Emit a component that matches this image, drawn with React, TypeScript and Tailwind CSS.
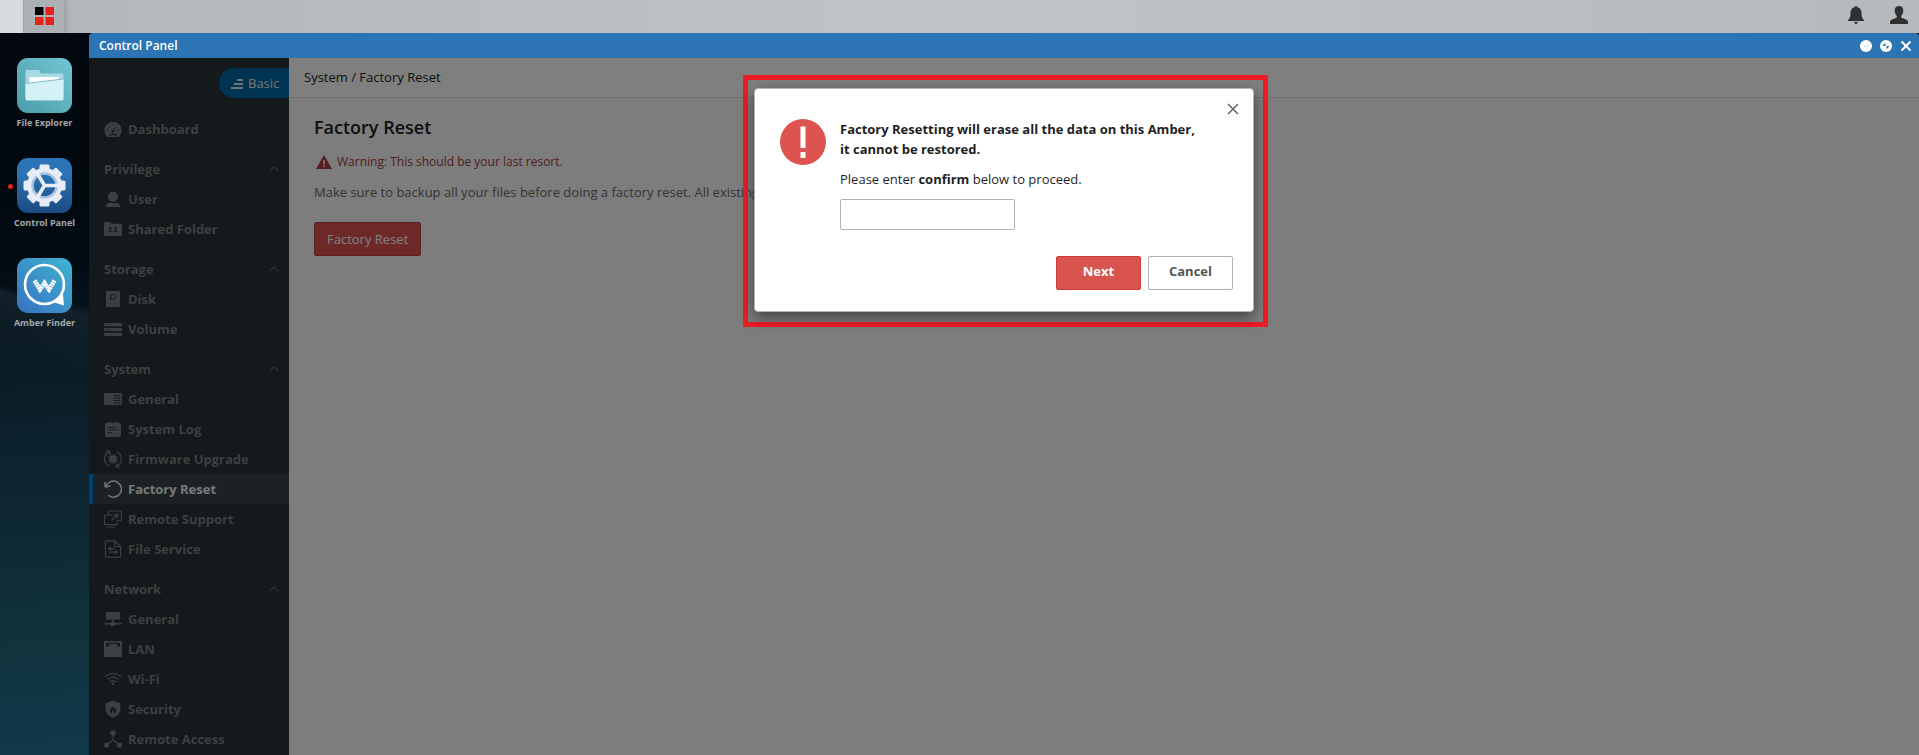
import type { ReactNode } from "react";

const BG = "#283238";

function Icon({ children }: { children: ReactNode }) {
  return (
    <svg viewBox="0 0 18 18" className="size-[18px] shrink-0" fill="currentColor" aria-hidden="true">
      {children}
    </svg>
  );
}

const line = { fill: "none", stroke: "currentColor", strokeWidth: 1.2 };
const cut = { fill: "none", stroke: BG, strokeWidth: 1.1 };

const icons: Record<string, ReactNode> = {
  dashboard: (
    <>
      <path d="M3.2 17A8.7 8.7 0 1 1 14.8 17z" />
      <path d="M5 15.400q4-2 8 0M9.200 11l3-4" {...cut} />
      <circle cx="8.800" cy="11.400" r="1.300" fill={BG} />
      <path d="M9 3.800v1.400M4.600 5.800l.9.900M2.800 10h1.400M13.800 10h1.400" {...cut} strokeWidth={0.900} />
    </>
  ),
  user: (
    <>
      <circle cx="9" cy="6.8" r="5" />
      <path d="M1.8 17c.3-2.8 2-4 4.5-4.4 1.600.9 3.800.9 5.400 0 2.500.4 4.200 1.600 4.500 4.400z" />
    </>
  ),
  shared: (
    <>
      <path d="M0 3.200Q0 2 1.200 2h5l1.400 1.800h9.200Q18 3.800 18 5v9.800Q18 16 16.800 16H1.200Q0 16 0 14.800z" />
      <g fill={BG}>
        <circle cx="6.400" cy="8.200" r="1.200" />
        <circle cx="11.600" cy="8.200" r="1.200" />
        <path d="M3.800 11.800q.2-1.600 2.600-1.600t2.300 1.600zM9.300 11.800q.1-1.600 2.300-1.600t2.600 1.600z" />
      </g>
    </>
  ),
  disk: (
    <>
      <rect x="2" y="1" width="14" height="16" rx="1" />
      <circle cx="9" cy="6.700" r="2.600" {...cut} strokeWidth={0.900} />
      <path d="M6.500 5v4.800h1.200" {...cut} strokeWidth={0.700} />
    </>
  ),
  volume: (
    <>
      <rect y="3" width="18" height="3.200" rx="0.800" />
      <rect y="7.900" width="18" height="3.200" rx="0.800" />
      <rect y="12.800" width="18" height="3.200" rx="0.800" />
      <path d="M2 4.600h5M2 9.500h5" {...cut} strokeWidth={0.500} />
    </>
  ),
  general: (
    <>
      <rect y="3" width="18" height="12" rx="1" />
      <path d="M9.500 5.500h7M9.500 8h7M9.500 10.500h7M9.500 13h7" {...cut} />
    </>
  ),
  log: (
    <>
      <path d="M1 4.500Q1 3 2.500 3H4V1.500h1.200V3h2V1.500h1.200V3h2V1.500h1.200V3h1.200V1.500H14V3h1.500Q17 3 17 4.500v11q0 1.500-1.500 1.500h-13Q1 17 1 15.500z" />
      <path d="M4 7.500h7.500M3.500 9.800h10.500M4 12.600h4.500" {...cut} strokeWidth={0.900} />
    </>
  ),
  firmware: (
    <>
      <path d="M5.500 1.400A8.300 8.300 0 0 0 5 16.300M12.500 16.600A8.300 8.300 0 0 0 13 1.700" {...line} />
      <path d="M2.300.9l3.500.2L5 4.500M15.700 17.100l-3.500-.2.800-3.400" {...line} />
      <rect x="5.600" y="5.600" width="6.800" height="6.800" rx="0.800" />
      <path d="M7 4v10M9 4v10M11 4v10M4 7h10M4 9h10M4 11h10" {...line} strokeWidth={0.700} />
    </>
  ),
  reset: (
    <>
      <path d="M2 6.200A8 8 0 1 1 4.200 15.200" {...line} strokeWidth={1.500} />
      <path d="M.8 2.200l.6 4.700 4.800-1" {...line} strokeWidth={1.500} />
    </>
  ),
  remote: (
    <>
      <path d="M4.500 4V2.200Q4.500 1 5.700 1h10.600q1.200 0 1.200 1.200v7q0 1.200-1.200 1.200h-2" {...line} />
      <path d="M8 5H1.600Q.6 5 .6 6v7.600q0 1 1 1h10.800q1 0 1-1V10M2.500 17h9M7.500 10.500L13 5M9.800 4.700h3.700v3.600" {...line} />
    </>
  ),
  file: (
    <>
      <path d="M10.800.8H2.600Q1.400.8 1.400 2v14q0 1.200 1.200 1.200h12.800q1.200 0 1.200-1.200V6.600zM10.800.8v5.800h5.800" {...line} />
      <path d="M10.500 8.800H5.500M5 12.200h7.500" {...line} strokeWidth={1.200} />
      <path d="M7 6.400v4.800L3.800 8.800zM11.300 9.800v4.800l3.200-2.400z" />
    </>
  ),
  network: (
    <>
      <rect x="2" y="2" width="14" height="7.500" rx="0.800" />
      <path d="M8.300 9h1.400v3h1.500v1h6.300v1.600h-6.300V16H6.800v-1.400H.5V13h6.300v-1h1.500z" />
    </>
  ),
  lan: (
    <>
      <rect y="1" width="18" height="16" rx="0.600" />
      <path d="M2 6.500V3h3v3.200zM13 3h3v3.500l-3-.3zM5 2.600h8v1.200H5z" fill={BG} />
    </>
  ),
  wifi: (
    <>
      <path d="M.8 6.800q8.200-7 16.400 0M3.400 9.600q5.600-4.800 11.200 0M6 12.300q3-2.600 6 0" {...line} strokeWidth={1.300} />
      <circle cx="9" cy="14" r="1.200" />
    </>
  ),
  security: (
    <>
      <path d="M9 .4l7.400 2.800v5.200q0 6.600-7.400 9.400-7.400-2.800-7.400-9.400V3.200z" />
      <path d="M8.600 5.200c.2 2 .8 2.400 1.400 3.200l.8-1c1 1.600 1.900 3 1.200 4.800-.3.900-.9 1.400-1.600 1.700.4-1.600-.5-2.700-1.400-3.600-.8 1-1.800 2-1.400 3.600-2-.8-2.300-2.900-1.300-4.600.9-1.400 2.100-2.300 2.300-4.100z" fill={BG} />
    </>
  ),
  access: (
    <>
      <circle cx="9" cy="2.900" r="2.700" />
      <path d="M9 5v5.200L3 14.500M9 10.200l6 4.300" {...line} />
      <rect x="0.300" y="12.800" width="4.600" height="4.600" rx="1" />
      <rect x="13.100" y="12.800" width="4.600" height="4.600" rx="1" />
    </>
  ),
};

const sections = [
  { title: "Privilege", items: [["user", "User"], ["shared", "Shared Folder"]] },
  { title: "Storage", items: [["disk", "Disk"], ["volume", "Volume"]] },
  {
    title: "System",
    items: [
      ["general", "General"],
      ["log", "System Log"],
      ["firmware", "Firmware Upgrade"],
      ["reset", "Factory Reset"],
      ["remote", "Remote Support"],
      ["file", "File Service"],
    ],
  },
  {
    title: "Network",
    items: [
      ["network", "General"],
      ["lan", "LAN"],
      ["wifi", "Wi-Fi"],
      ["security", "Security"],
      ["access", "Remote Access"],
    ],
  },
];

function NavItem({ icon, label, active = false }: { icon: string; label: string; active?: boolean }) {
  return (
    <a
      href="#"
      aria-current={active ? "page" : undefined}
      className={
        active
          ? "flex h-[30px] items-center gap-1.5 border-l-4 border-[#0082d8] bg-[#384448] pl-[11px] font-bold text-[#f0f0f0]"
          : "flex h-[30px] items-center gap-1.5 border-l-4 border-transparent pl-[11px] font-bold text-[#7d7f80]"
      }
    >
      <Icon>{icons[icon]}</Icon>
      <span className="pt-0.5">{label}</span>
    </a>
  );
}

function Sidebar() {
  return (
    <nav className="w-[200px] shrink-0 overflow-hidden bg-[#283238] pt-2.5">
      <button className="mb-4 ml-auto flex h-[30px] w-[70px] items-center gap-[5px] rounded-l-full bg-[#0068a6] pl-3 text-[#e8e8e8]">
        <svg viewBox="0 0 12 10" className="mt-0.5 h-[10px] w-3 shrink-0" fill="currentColor" aria-hidden="true">
          <path d="M6 0h6v2H6zM3 4h9v2H3zM0 8h12v2H0z" />
        </svg>
        <span className="pt-0.5">Basic</span>
      </button>
      <NavItem icon="dashboard" label="Dashboard" />
      {sections.map((s) => (
        <section key={s.title}>
          <button className="mt-2.5 flex h-[30px] w-full items-center justify-between pr-2.5 pl-[15px] font-bold text-[#7d7f80]">
            <span className="pt-0.5">{s.title}</span>
            <svg viewBox="0 0 10 6" className="h-1.5 w-2.5" aria-hidden="true">
              <path d="M.8 5.200L5 .8l4.200 4.400" fill="none" stroke="currentColor" strokeWidth="1" />
            </svg>
          </button>
          {s.items.map(([icon, label]) => (
            <NavItem key={label} icon={icon} label={label} active={label === "Factory Reset"} />
          ))}
        </section>
      ))}
    </nav>
  );
}

function FolderArt() {
  return (
    <svg viewBox="0 0 55 55" className="size-[55px]" aria-hidden="true">
      <defs>
        <linearGradient id="teal" x1="1" y1="0" x2="0" y2="1">
          <stop offset="0" stopColor="#72c6d3" />
          <stop offset="1" stopColor="#4c9ca9" />
        </linearGradient>
      </defs>
      <rect width="55" height="55" rx="11" fill="url(#teal)" />
      <path d="M8.500 13.500q0-1.500 1.500-1.500h12l2 3.500h21q1.500 0 1.500 1.500v22h-38z" fill="#a5dae2" />
      <path d="M12.500 19H42v6H12.500z" fill="#fff" />
      <path d="M8.500 25.500L46.500 21v20q0 1.500-1.500 1.500H10q-1.500 0-1.500-1.500z" fill="#d4f1f5" />
      <path d="M8.500 25.500L46.500 21" stroke="#7fbcc6" strokeWidth="1" />
    </svg>
  );
}

const teeth = [0, 45, 90, 135, 180, 225, 270, 315];

function GearArt() {
  return (
    <svg viewBox="0 0 55 55" className="size-[55px]" aria-hidden="true">
      <defs>
        <linearGradient id="blue" x1="0" y1="0" x2="0" y2="1">
          <stop offset="0.300" stopColor="#2b74b5" />
          <stop offset="1" stopColor="#1c4a80" />
        </linearGradient>
      </defs>
      <rect width="55" height="55" rx="11" fill="url(#blue)" />
      <g fill="#e8edf5">
        {teeth.map((a) => (
          <rect key={a} x="22.500" y="6.500" width="10" height="9" rx="1.500" transform={`rotate(${a} 27.500 27.500)`} />
        ))}
      </g>
      <circle cx="27.500" cy="27.500" r="15" fill="none" stroke="#e8edf5" strokeWidth="5" />
      <circle cx="27.500" cy="27.500" r="12" fill="none" stroke="#a9c4de" strokeWidth="2.500" />
      <path d="M27.500 27.500H42M27.500 27.500L20 15M27.500 27.500L20 40" stroke="#e8edf5" strokeWidth="3.600" />
    </svg>
  );
}

function FinderArt() {
  return (
    <svg viewBox="0 0 55 55" className="size-[55px]" aria-hidden="true">
      <defs>
        <linearGradient id="sky" x1="1" y1="0" x2="0" y2="1">
          <stop offset="0" stopColor="#3eb4d3" />
          <stop offset="1" stopColor="#3872bf" />
        </linearGradient>
      </defs>
      <rect width="55" height="55" rx="11" fill="url(#sky)" />
      <circle cx="27.500" cy="26.500" r="19.500" fill="none" stroke="#fff" strokeWidth="2.600" />
      <path d="M46 36l1 11.500-11-3.500q6-2.500 10-8z" fill="#fff" />
      <path d="M17.500 22.500l5.500 9 4.500-6.500 4.500 6.500 5.500-9" fill="none" stroke="#fff" strokeWidth="4.500" strokeDasharray="2 0.500" />
    </svg>
  );
}

function Dock() {
  const apps = [
    { name: "File Explorer", art: <FolderArt />, running: false },
    { name: "Control Panel", art: <GearArt />, running: true },
    { name: "Amber Finder", art: <FinderArt />, running: false },
  ];
  return (
    <aside className="flex w-[89px] shrink-0 flex-col bg-[linear-gradient(195deg,transparent_37%,#13222a_38%,transparent_46%),linear-gradient(177deg,#02080e_0%,#020b12_32%,#0a1b24_44%,#0e2733_66%,#10333d_85%,#12384b_100%)] pt-[25px]">
      {apps.map((a) => (
        <button key={a.name} className="relative flex h-[100px] flex-col items-center gap-0.5 text-[9px] leading-4 font-bold text-[#a4a8ab]">
          {a.art}
          <span>{a.name}</span>
          {a.running && <span className="absolute top-[26px] left-2 size-[5px] rounded-full bg-[#e2231a]" />}
        </button>
      ))}
    </aside>
  );
}

function TopBar() {
  return (
    <header className="flex h-[33px] shrink-0 items-stretch bg-[linear-gradient(90deg,#b2b7ba,#bfc4c7_50%,#b4babd)]">
      <div className="w-[23px] bg-[#d9dcde]" />
      <button aria-label="Home" className="flex w-[42px] items-center justify-center border-x border-[#9ea2a5] bg-[#acb1b4] pb-px shadow-[2px_0_4px_#9ea2a5]">
        <svg viewBox="0 0 19 18" className="h-[18px] w-[19px]" aria-hidden="true">
          <path d="M0 0h8.500v8H0z" />
          <path d="M10.500 0H19v8h-8.500zM0 10h8.500v8H0zM10.500 10H19v8h-8.500z" fill="#e2231a" />
        </svg>
      </button>
      <div className="ml-auto flex items-center gap-[26px] pr-[11px] pb-[3px] text-[#303030]">
        <button aria-label="Notifications">
          <svg viewBox="0 0 16 18" className="h-[18px] w-4" fill="currentColor" aria-hidden="true">
            <path d="M8 0q1.300 0 1.300 1.300C12.500 1.900 13.500 4.500 13.500 7c0 3.600.5 5.500 2.500 7v1H0v-1c2-1.500 2.500-3.400 2.500-7 0-2.500 1-5.100 4.200-5.700Q6.700 0 8 0zM6 16h4q-.5 2-2 2t-2-2z" />
          </svg>
        </button>
        <button aria-label="Account">
          <svg viewBox="0 0 18 18" className="size-[18px]" fill="currentColor" aria-hidden="true">
            <path d="M9 0c3 0 4.300 1.900 4.300 4.500 0 2.400-.9 4.100-2.100 5.500v1.600c.8 1 6.800 1.400 6.800 4.600V18H0v-1.800c0-3.200 6-3.600 6.800-4.600V10C5.600 8.600 4.700 6.900 4.700 4.500 4.700 1.900 6 0 9 0z" />
          </svg>
        </button>
      </div>
    </header>
  );
}

function TitleBar() {
  return (
    <div className="flex h-[25px] shrink-0 items-center rounded-t-sm bg-[#2c74b3] pr-[7px] pl-2.5 text-xs font-semibold text-white">
      <h1>Control Panel</h1>
      <div className="ml-auto flex gap-2">
        <button aria-label="Minimize">
          <svg viewBox="0 0 12 12" className="size-3" aria-hidden="true">
            <circle cx="6" cy="6" r="6" fill="#fff" />
            <path d="M3 6h6" stroke="#c9dcec" />
          </svg>
        </button>
        <button aria-label="Restore">
          <svg viewBox="0 0 12 12" className="size-3" aria-hidden="true">
            <circle cx="6" cy="6" r="6" fill="#fff" />
            <path d="M5.500 2.500v3.500H2.500zM6.500 9.500V6h3z" fill="#2c74b3" />
          </svg>
        </button>
        <button aria-label="Close">
          <svg viewBox="0 0 12 12" className="size-3" aria-hidden="true">
            <path d="M1.500 1.500l9 9M10.500 1.500l-9 9" stroke="#fff" strokeWidth="2" />
          </svg>
        </button>
      </div>
    </div>
  );
}

function Content() {
  return (
    <main className="flex min-w-0 flex-1 flex-col bg-[#fafafa]">
      <div className="flex h-10 items-center border-b border-[#dedede] bg-white px-[15px] text-[#222]">
        System / Factory Reset
      </div>
      <div className="flex flex-col items-start px-[25px] pt-[17px]">
        <h2 className="text-lg leading-6 font-semibold text-[#1c1c1c]">Factory Reset</h2>
        <p className="mt-[13px] flex items-center gap-[5px] pl-0.5 text-xs leading-5 text-[#a04040]">
          <svg viewBox="0 0 16 14" className="h-3.5 w-4" aria-hidden="true">
            <path d="M8 0l8 14H0z" fill="#b03e3c" />
            <path d="M7.200 5h1.600v4.500H7.200zM7.200 10.500h1.600V12H7.200z" fill="#fff" />
          </svg>
          Warning: This should be your last resort.
        </p>
        <p className="mt-2.5 leading-5 text-[#6a6a6a]">
          Make sure to backup all your files before doing a factory reset. All existing
        </p>
        <button className="mt-5 h-[34px] rounded-xs border border-[#c93c3a] bg-[#d9534f] px-3 pt-0.5 text-white">
          Factory Reset
        </button>
      </div>
    </main>
  );
}

function ConfirmDialog() {
  return (
    <div className="absolute inset-0 flex items-start justify-center bg-black/50 pt-[17px] pl-[3px]">
      <div className="border-[5px] border-[#ee1c25] pt-2 pr-[9px] pb-[10px] pl-1.5">
        <div
          role="dialog"
          aria-labelledby="dialog-title"
          className="w-[500px] rounded-sm border border-[#b5b5b5] bg-white px-5 pt-3.5 pb-[21px] text-[#1f1f1f] shadow-[0_5px_15px_rgba(0,0,0,0.5)]"
        >
          <div className="flex h-3">
            <button aria-label="Dismiss" className="-mr-1.5 ml-auto flex size-3 items-center">
              <svg viewBox="0 0 12 12" className="size-3" aria-hidden="true">
                <path d="M1 1l10 10M11 1L1 11" stroke="#666" strokeWidth="1.500" />
              </svg>
            </button>
          </div>
          <div className="flex items-start gap-[14px] pt-1 pl-[5px]">
            <svg viewBox="0 0 46 46" className="size-[46px] shrink-0" aria-hidden="true">
              <circle cx="23" cy="23" r="23" fill="#dc534f" />
              <path d="M20.500 7.500h5V29h-5zM20.500 33h5v6h-5z" fill="#fff" />
            </svg>
            <div className="leading-5">
              <p id="dialog-title" className="font-bold">
                Factory Resetting will erase all the data on this Amber,
                <br />
                it cannot be restored.
              </p>
              <label htmlFor="confirm" className="mt-2.5 block">
                Please enter <b>confirm</b> below to proceed.
              </label>
              <input id="confirm" type="text" className="mt-2.5 block h-[31px] w-[175px] rounded-xs border border-[#b3b3b3] px-2 outline-none" />
            </div>
          </div>
          <div className="mt-[26px] flex justify-end gap-[7px] font-bold">
            <button className="h-[34px] w-[85px] rounded-xs border border-[#cf3c38] bg-[#d9534f] pb-0.5 text-white">Next</button>
            <button className="h-[34px] w-[85px] rounded-xs border border-[#b3b3b3] bg-white pb-0.5 text-[#555]">Cancel</button>
          </div>
        </div>
      </div>
    </div>
  );
}

export default function App() {
  return (
    <div className="flex h-screen flex-col overflow-hidden font-['Open_Sans',sans-serif] text-[13px]">
      <TopBar />
      <div className="flex min-h-0 flex-1 bg-[#02080e]">
        <Dock />
        <div className="flex min-w-0 flex-1 flex-col">
          <TitleBar />
          <div className="relative flex min-h-0 flex-1">
            <Sidebar />
            <Content />
            <ConfirmDialog />
          </div>
        </div>
      </div>
    </div>
  );
}
